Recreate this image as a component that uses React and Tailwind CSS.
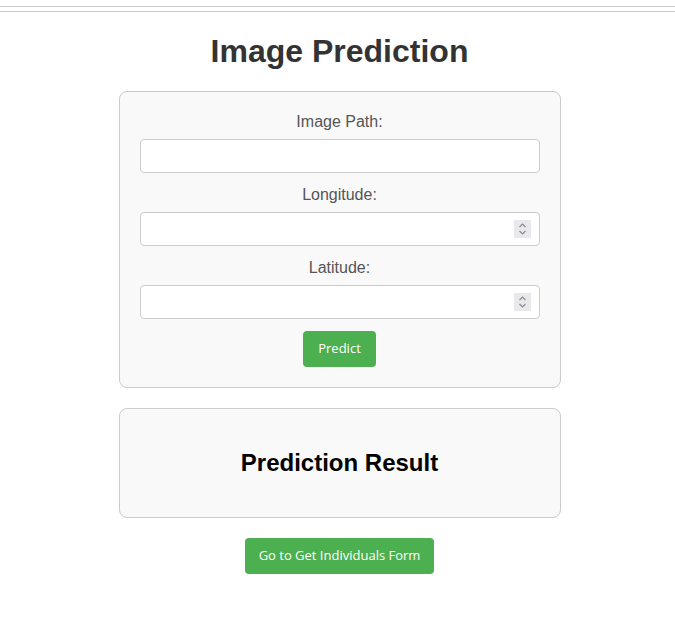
import React, { useState } from "react";

const labelCls =
  "block text-center text-[16px] leading-[19px] mb-[8px] text-[#555]";
const inputCls =
  "block w-full h-[34px] px-[8px] bg-white border border-[#ccc] rounded-[4px] text-[14px] outline-none";
const btnCls =
  "h-[36px] rounded-[4px] bg-[#4caf50] text-white text-[13px] font-['Open_Sans',sans-serif]";

function NumberField({ value, onChange }) {
  return (
    <div className="relative w-full mb-[12px]">
      <input
        type="number"
        className={`${inputCls} pr-[30px] [appearance:textfield] [&::-webkit-inner-spin-button]:appearance-none [&::-webkit-outer-spin-button]:appearance-none`}
        value={value}
        onChange={onChange}
      />
      <span className="absolute right-[9px] top-[8px] w-[17px] h-[18px] bg-[#e9e9ed] pointer-events-none">
        <svg width="17" height="18" viewBox="0 0 17 18" fill="none" stroke="#8a8a8f" strokeWidth="1.2">
          <path d="M5.5 7 L8.5 4 L11.5 7" />
          <path d="M5.5 11 L8.5 14 L11.5 11" />
        </svg>
      </span>
    </div>
  );
}

export default function App() {
  const [imagePath, setImagePath] = useState("");
  const [longitude, setLongitude] = useState("");
  const [latitude, setLatitude] = useState("");

  return (
    <div className="min-h-[631px] bg-white font-['Liberation_Sans',Arial,sans-serif]">
      {/* double rule at the top */}
      <div className="mt-[6px] h-[6px] border-y border-[#c8c8c8]" />

      <div className="flex flex-col items-center pl-[4px]">
        <h1 className="mt-[21px] mb-[21px] text-[32px] leading-[37px] font-bold text-[#333]">
          Image Prediction
        </h1>

        <form
          className="w-[442px] p-[20px] bg-[#f9f9f9] border border-[#ccc] rounded-lg flex flex-col items-center"
          onSubmit={(e) => e.preventDefault()}
        >
          <label className={labelCls}>Image Path:</label>
          <input
            type="text"
            className={`${inputCls} mb-[12px]`}
            value={imagePath}
            onChange={(e) => setImagePath(e.target.value)}
          />

          <label className={labelCls}>Longitude:</label>
          <NumberField value={longitude} onChange={(e) => setLongitude(e.target.value)} />

          <label className={labelCls}>Latitude:</label>
          <NumberField value={latitude} onChange={(e) => setLatitude(e.target.value)} />

          <button type="submit" className={`${btnCls} px-[15px]`}>
            Predict
          </button>
        </form>

        <div className="mt-[20px] w-[442px] py-[40px] bg-[#f9f9f9] border border-[#ccc] rounded-lg text-center">
          <h2 className="text-[24px] leading-[28px] font-bold text-black">
            Prediction Result
          </h2>
        </div>

        <button type="button" className={`${btnCls} w-[189px] mt-[20px]`}>
          Go to Get Individuals Form
        </button>
      </div>
    </div>
  );
}
